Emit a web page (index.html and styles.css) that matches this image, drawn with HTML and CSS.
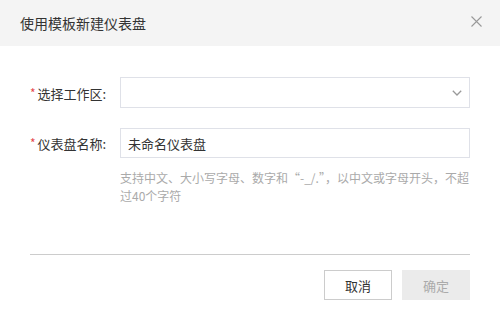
FILE: index.html
```html
<!DOCTYPE html>
<html lang="zh-CN">
<head>
    <meta charset="UTF-8">
    <meta name="viewport" content="width=device-width, initial-scale=1.0">
    <title>使用模板新建仪表盘</title>
    <link rel="stylesheet" href="styles.css">
</head>
<body>
    <div class="dialog">
        <div class="dialog-header">
            <h1>使用模板新建仪表盘</h1>
            <button class="close" aria-label="关闭">
                <svg width="11" height="11" viewBox="0 0 11 11">
                    <path d="M0.5 0.5 L10.5 10.5 M10.5 0.5 L0.5 10.5" stroke="#999" stroke-width="1.1" fill="none"/>
                </svg>
            </button>
        </div>

        <div class="dialog-body">
            <div class="form-row">
                <label class="label"><span class="required">*</span>选择工作区:</label>
                <div class="select">
                    <svg width="10" height="6" viewBox="0 0 10 6">
                        <path d="M0.8 0.8 L5 5 L9.2 0.8" stroke="#999" stroke-width="1.3" fill="none"/>
                    </svg>
                </div>
            </div>

            <div class="form-row second">
                <label class="label"><span class="required">*</span>仪表盘名称:</label>
                <div class="field">
                    <input type="text" value="未命名仪表盘">
                    <p class="hint">支持中文、大小写字母、数字和“-_/.”，以中文或字母开头，不超过40个字符</p>
                </div>
            </div>
        </div>

        <div class="dialog-footer">
            <button class="btn">取消</button>
            <button class="btn disabled">确定</button>
        </div>
    </div>
</body>
</html>
```

FILE: styles.css
```css
body {
    margin: 0;
    font-family: "Noto Sans CJK SC", "Noto Sans", sans-serif;
    color: #333;
    background-color: white;
}

.dialog {
    width: 500px;
}

.dialog-header {
    height: 46px;
    background-color: #f4f4f4;
    display: flex;
    align-items: center;
    justify-content: space-between;
    padding: 0 18px 0 20px;
}

.dialog-header h1 {
    margin: 0;
    font-size: 14px;
    font-weight: normal;
    color: #333;
}

.close {
    border: none;
    background: none;
    padding: 0;
    display: flex;
    margin-top: -3px;
}

.dialog-body {
    margin: 0 30px;
    padding: 31px 0 49px;
    border-bottom: 1px solid #ccc;
}

.form-row {
    display: flex;
    align-items: flex-start;
}

.form-row.second {
    margin-top: 19px;
}

.label {
    width: 90px;
    flex-shrink: 0;
    font-size: 13px;
    line-height: 30px;
    color: #333;
}

.form-row:first-child .label {
    line-height: 31px;
}

.required {
    color: #e5484d;
    font-size: 12px;
    margin-right: 2px;
    vertical-align: 1px;
}

.select {
    flex: 1;
    height: 29px;
    border: 1px solid #dfe1e8;
    display: flex;
    align-items: center;
    justify-content: flex-end;
    padding-right: 7px;
}

.field {
    flex: 1;
}

.field input {
    display: block;
    width: 100%;
    box-sizing: border-box;
    height: 30px;
    border: 1px solid #dfe1e8;
    padding: 0 7px;
    font-family: inherit;
    font-size: 13px;
    color: #333;
    outline: none;
}

.hint {
    margin: 11px 0 0;
    font-size: 12px;
    line-height: 18px;
    color: #aaa;
}

.dialog-footer {
    display: flex;
    justify-content: flex-end;
    gap: 10px;
    padding: 15px 30px 0;
}

.btn {
    width: 68px;
    height: 30px;
    border: 1px solid #ccc;
    background-color: white;
    font-family: inherit;
    font-size: 13px;
    color: #333;
}

.btn.disabled {
    border-color: #ebebeb;
    background-color: #ebebeb;
    color: #aaa;
}
```
